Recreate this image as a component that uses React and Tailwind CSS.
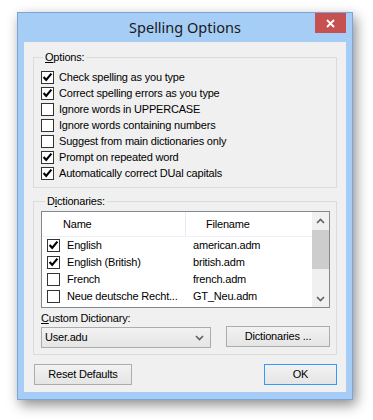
import React from 'react';

const FONT = { fontFamily: '"Liberation Sans", Arial, sans-serif' };

const options = [
  { label: 'Check spelling as you type', checked: true },
  { label: 'Correct spelling errors as you type', checked: true },
  { label: 'Ignore words in UPPERCASE', checked: false },
  { label: 'Ignore words containing numbers', checked: false },
  { label: 'Suggest from main dictionaries only', checked: false },
  { label: 'Prompt on repeated word', checked: true },
  { label: 'Automatically correct DUal capitals', checked: true },
];

const dictionaries = [
  { name: 'English', file: 'american.adm', checked: true },
  { name: 'English (British)', file: 'british.adm', checked: true },
  { name: 'French', file: 'french.adm', checked: false },
  { name: 'Neue deutsche Recht...', file: 'GT_Neu.adm', checked: false },
];

function CheckBox({ checked }) {
  return (
    <span className="flex h-[13px] w-[13px] shrink-0 items-center justify-center border border-[#333333] bg-white">
      {checked && (
        <svg width="11" height="11" viewBox="0 0 11 11">
          <path d="M1.6 5 L4.2 7.9 L9.4 1.6" fill="none" stroke="#000" strokeWidth="2.2" />
        </svg>
      )}
    </span>
  );
}

function Chevron({ up }) {
  return (
    <svg width="9" height="6" viewBox="0 0 9 6">
      <path d={up ? 'M1 5 L4.5 1.5 L8 5' : 'M1 1 L4.5 4.5 L8 1'} fill="none" stroke="#606060" strokeWidth="1.6" />
    </svg>
  );
}

function WinButton({ children, className = '', focused }) {
  return (
    <button
      type="button"
      className={`flex h-[21px] items-center justify-center border bg-gradient-to-b from-[#f2f2f2] to-[#e5e5e5] text-[11px] text-black ${
        focused ? 'border-[#3399ff]' : 'border-[#acacac]'
      } ${className}`}
    >
      {children}
    </button>
  );
}

export default function App() {
  return (
    <div className="h-[420px] w-[373px] bg-white pl-[17px] pt-[12px] tracking-[-0.2px]" style={FONT}>
      <div className="flex h-[388px] w-[336px] flex-col border border-[#7ca5d6] bg-[#a5cdf5] shadow-[3px_5px_12px_rgba(0,0,0,0.45)]">
        {/* title bar */}
        <div className="relative flex h-[29px] shrink-0 items-center justify-center">
          <span
            className="text-[14.5px] tracking-normal text-[#1a1a1a]"
            style={{ fontFamily: '"Noto Sans", "Open Sans", sans-serif' }}
          >
            Spelling Options
          </span>
          <button
            type="button"
            className="absolute right-[6px] top-0 flex h-[20px] w-[31px] items-center justify-center bg-[#c75050]"
          >
            <svg width="9" height="9" viewBox="0 0 9 9">
              <path d="M1 1 L8 8 M8 1 L1 8" stroke="#fff" strokeWidth="1.8" />
            </svg>
          </button>
        </div>

        {/* client area */}
        <div className="mx-[6px] mb-[7px] flex flex-1 flex-col bg-[#f0f0f0] text-[11px] text-black">
          <fieldset className="ml-[9px] mt-[9px] w-[304px] border border-[#dcdcdc] pb-[6px] pl-[7px] pt-[5px] leading-[13px]">
            <legend className="ml-[2px] px-[2px] leading-[13px]">
              <span className="underline">O</span>ptions:
            </legend>
            <div className="flex flex-col">
              {options.map((o) => (
                <div key={o.label} className="flex h-[16px] items-center gap-[5px]">
                  <CheckBox checked={o.checked} />
                  <span>{o.label}</span>
                </div>
              ))}
            </div>
          </fieldset>

          <fieldset className="ml-[9px] mt-[7px] w-[304px] border border-[#dcdcdc] pb-[6px] pl-[7px] pt-[3px] leading-[13px]">
            <legend className="ml-[4px] px-[2px] leading-[13px]">
              D<span className="underline">i</span>ctionaries:
            </legend>

            <div className="flex h-[97px] w-[289px] border border-[#828790] bg-white">
              <div className="flex flex-1 flex-col">
                <div className="flex h-[25px] shrink-0 border-b border-[#eef2f8]">
                  <div className="flex w-[144px] items-center border-r border-[#e5ecf6] pl-[21px]">Name</div>
                  <div className="flex flex-1 items-center pl-[20px]">Filename</div>
                </div>
                {dictionaries.map((d) => (
                  <div key={d.name} className="flex h-[17px] items-center">
                    <div className="flex w-[144px] items-center gap-[7px] pl-[5px]">
                      <CheckBox checked={d.checked} />
                      <span className="whitespace-nowrap">{d.name}</span>
                    </div>
                    <div className="pl-[7px]">{d.file}</div>
                  </div>
                ))}
              </div>
              <div className="flex w-[17px] flex-col bg-[#f0f0f0]">
                <div className="flex h-[17px] items-center justify-center">
                  <Chevron up />
                </div>
                <div className="mt-[1px] h-[39px] w-[17px] bg-[#cdcdcd]" />
                <div className="flex-1" />
                <div className="flex h-[17px] items-center justify-center">
                  <Chevron />
                </div>
              </div>
            </div>

            <div className="mt-[4px] leading-[13px]">
              <span className="underline">C</span>ustom Dictionary:
            </div>
            <div className="mt-[1px] flex items-start">
              <div className="mt-[1px] flex h-[21px] w-[170px] items-center justify-between border border-[#acacac] bg-gradient-to-b from-[#f2f2f2] to-[#e5e5e5] pl-[3px] pr-[6px]">
                <span>User.adu</span>
                <Chevron />
              </div>
              <WinButton className="ml-[15px] w-[104px]">Dictionaries ...</WinButton>
            </div>
          </fieldset>

          <div className="ml-[10px] mr-[9px] mt-[9px] flex justify-between">
            <WinButton className="w-[98px]">Reset Defaults</WinButton>
            <WinButton className="w-[73px]" focused>
              OK
            </WinButton>
          </div>
        </div>
      </div>
    </div>
  );
}
